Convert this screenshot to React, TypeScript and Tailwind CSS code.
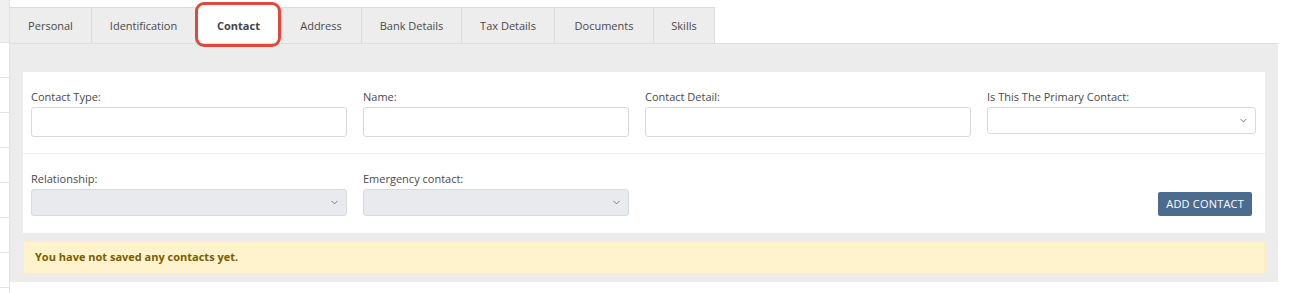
import { ChevronDown } from 'lucide-react'

const tabs = [
  { label: 'Personal', w: 'w-[82px]' },
  { label: 'Identification', w: 'w-[104px]' },
  { label: 'Contact', w: 'w-[85px]', active: true },
  { label: 'Address', w: 'w-[81px]' },
  { label: 'Bank Details', w: 'w-[100px]' },
  { label: 'Tax Details', w: 'w-[93px]' },
  { label: 'Documents', w: 'w-[99px]' },
  { label: 'Skills', w: 'w-[61px]' },
]

function Label({ children }: { children: React.ReactNode }) {
  return <div className="text-[11px] text-[#4a4a4a] mb-[3px] leading-[14px]">{children}</div>
}

function Select({ gray }: { gray?: boolean }) {
  return (
    <div
      className={`h-[27px] rounded-[3px] border border-[#d6d9dd] flex items-center justify-end pr-[6px] ${
        gray ? 'bg-[#e8eaed]' : 'bg-white'
      }`}
    >
      <ChevronDown size={11} strokeWidth={1.6} className="text-[#555]" />
    </div>
  )
}

function Input() {
  return <div className="h-[30px] rounded-[3px] border border-[#d6d9dd] bg-white" />
}

export default function App() {
  return (
    <div className="flex w-[1291px] h-[293px] bg-white font-['Open_Sans',sans-serif]">
      {/* left sidebar strip */}
      <div className="w-[10px] shrink-0 border-r border-[#e3e3e3] flex flex-col">
        <div className="h-[43px] bg-[#f0f0f0] border-b border-[#e3e3e3]" />
        {[0, 1, 2, 3, 4, 5, 6].map((i) => (
          <div key={i} className="h-[35px] border-b border-[#e3e3e3]" />
        ))}
      </div>

      <div className="w-[1268px] flex flex-col">
        {/* tabs */}
        <div className="relative flex pt-[7px]">
          {tabs.map((t) =>
            t.active ? (
              <div
                key={t.label}
                className={`${t.w} h-[36px] pt-[2px] bg-white flex items-center justify-center text-[11px] font-bold text-[#444]`}
              >
                {t.label}
              </div>
            ) : (
              <div
                key={t.label}
                className={`${t.w} h-[36px] pt-[2px] bg-[#ededed] border-r border-t border-[#dcdcdc] flex items-center justify-center text-[11px] text-[#4a4a4a]`}
              >
                {t.label}
              </div>
            )
          )}
          <div className="absolute left-[185px] top-[2px] w-[86px] h-[45px] rounded-[9px] border-[3px] border-[#e2483a] pointer-events-none" />
        </div>

        {/* panel */}
        <div className="bg-[#ececec] border-t border-[#e0e0e0] pt-[28px] px-[13px] pb-[8px]">
          <div className="bg-white">
            <div className="grid grid-cols-[316px_266px_326px_269px] gap-x-[16px] pl-[8px] pt-[18px] pb-[16px] border-b border-[#ececec]">
              <div>
                <Label>Contact Type:</Label>
                <Input />
              </div>
              <div>
                <Label>Name:</Label>
                <Input />
              </div>
              <div>
                <Label>Contact Detail:</Label>
                <Input />
              </div>
              <div>
                <Label>Is This The Primary Contact:</Label>
                <Select />
              </div>
            </div>
            <div className="flex items-end pl-[8px] pr-[13px] pt-[18px] pb-[17px]">
              <div className="w-[316px]">
                <Label>Relationship:</Label>
                <Select gray />
              </div>
              <div className="w-[266px] ml-[16px]">
                <Label>Emergency contact:</Label>
                <Select gray />
              </div>
              <div className="flex-1 flex justify-end">
                <button className="h-[24px] px-[8px] rounded-[2px] bg-[#4b6b8f] text-white text-[11px] tracking-[0.2px]">
                  ADD CONTACT
                </button>
              </div>
            </div>
          </div>
          <div className="mt-[8px] h-[33px] bg-[#fff3cd] border border-[#ffeeba] rounded-[2px] flex items-center pl-[11px] text-[11px] font-bold text-[#7a5c00]">
            You have not saved any contacts yet.
          </div>
        </div>
      </div>
    </div>
  )
}
